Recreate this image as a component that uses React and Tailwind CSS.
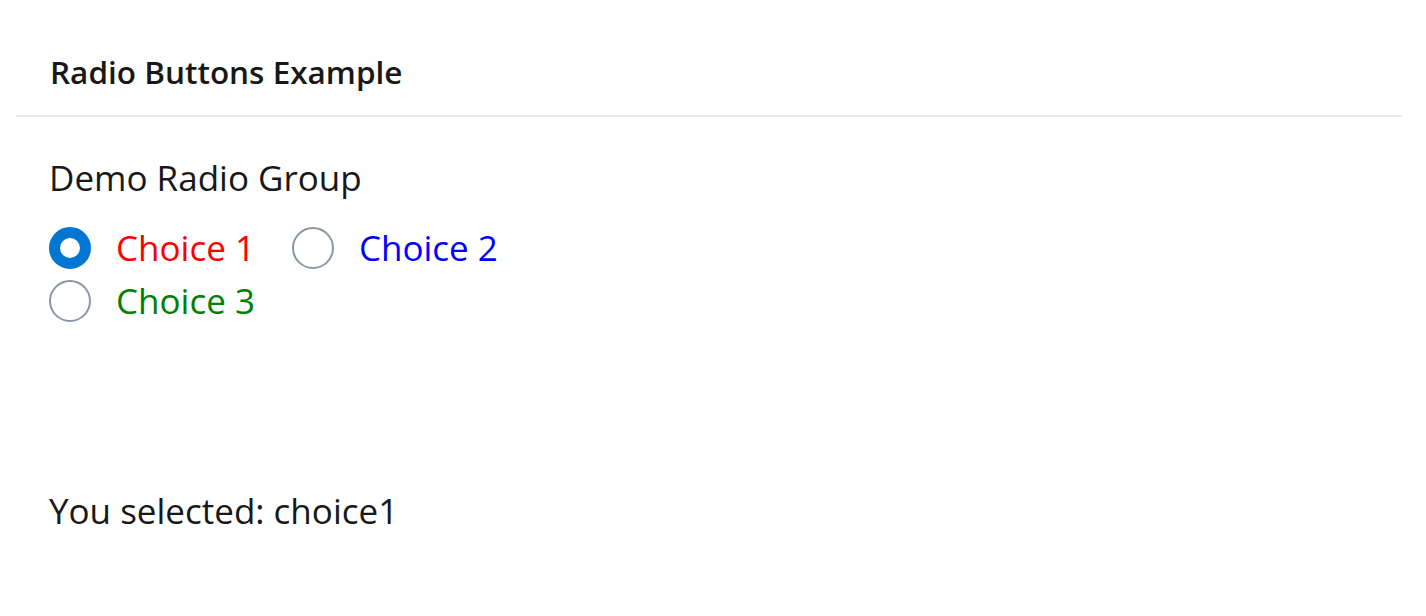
import React, { useState } from 'react';

const choices = [
  { value: 'choice1', label: 'Choice 1', color: 'text-[#ff0000]' },
  { value: 'choice2', label: 'Choice 2', color: 'text-[#0000ff]' },
  { value: 'choice3', label: 'Choice 3', color: 'text-[#008000]' },
];

const Radio = ({ checked, onClick }) => (
  <button
    onClick={onClick}
    className={`w-[42px] h-[42px] rounded-full shrink-0 bg-white ${
      checked ? 'border-[11px] border-[#0176d3]' : 'border-2 border-[#8a96a3]'
    }`}
  />
);

export default function App() {
  const [selected, setSelected] = useState('choice1');

  return (
    <div className="min-h-[616px] bg-white text-[#181818] font-['Open_Sans',sans-serif]">
      <div className="ml-4 mr-6">
        <div className="px-[34px] pt-[57px] pb-[28px] border-b-2 border-[#ebebeb]">
          <h1 className="text-[31.5px] font-semibold leading-[30px]">Radio Buttons Example</h1>
        </div>

        <div className="px-[33px] pt-[37px]">
          <div className="text-[35px] leading-[48px]">Demo Radio Group</div>
          <div className="flex flex-wrap w-[520px] gap-x-[37px] gap-y-[5px] mt-[22px]">
            {choices.map((c) => (
              <label key={c.value} className="flex items-center h-[48px] cursor-pointer">
                <Radio checked={selected === c.value} onClick={() => setSelected(c.value)} />
                <span className={`ml-[25px] text-[35px] leading-[48px] ${c.color}`}>{c.label}</span>
              </label>
            ))}
          </div>

          <div className="mt-[162px] text-[35px] leading-[48px]">You selected: {selected}</div>
        </div>
      </div>
    </div>
  );
}
